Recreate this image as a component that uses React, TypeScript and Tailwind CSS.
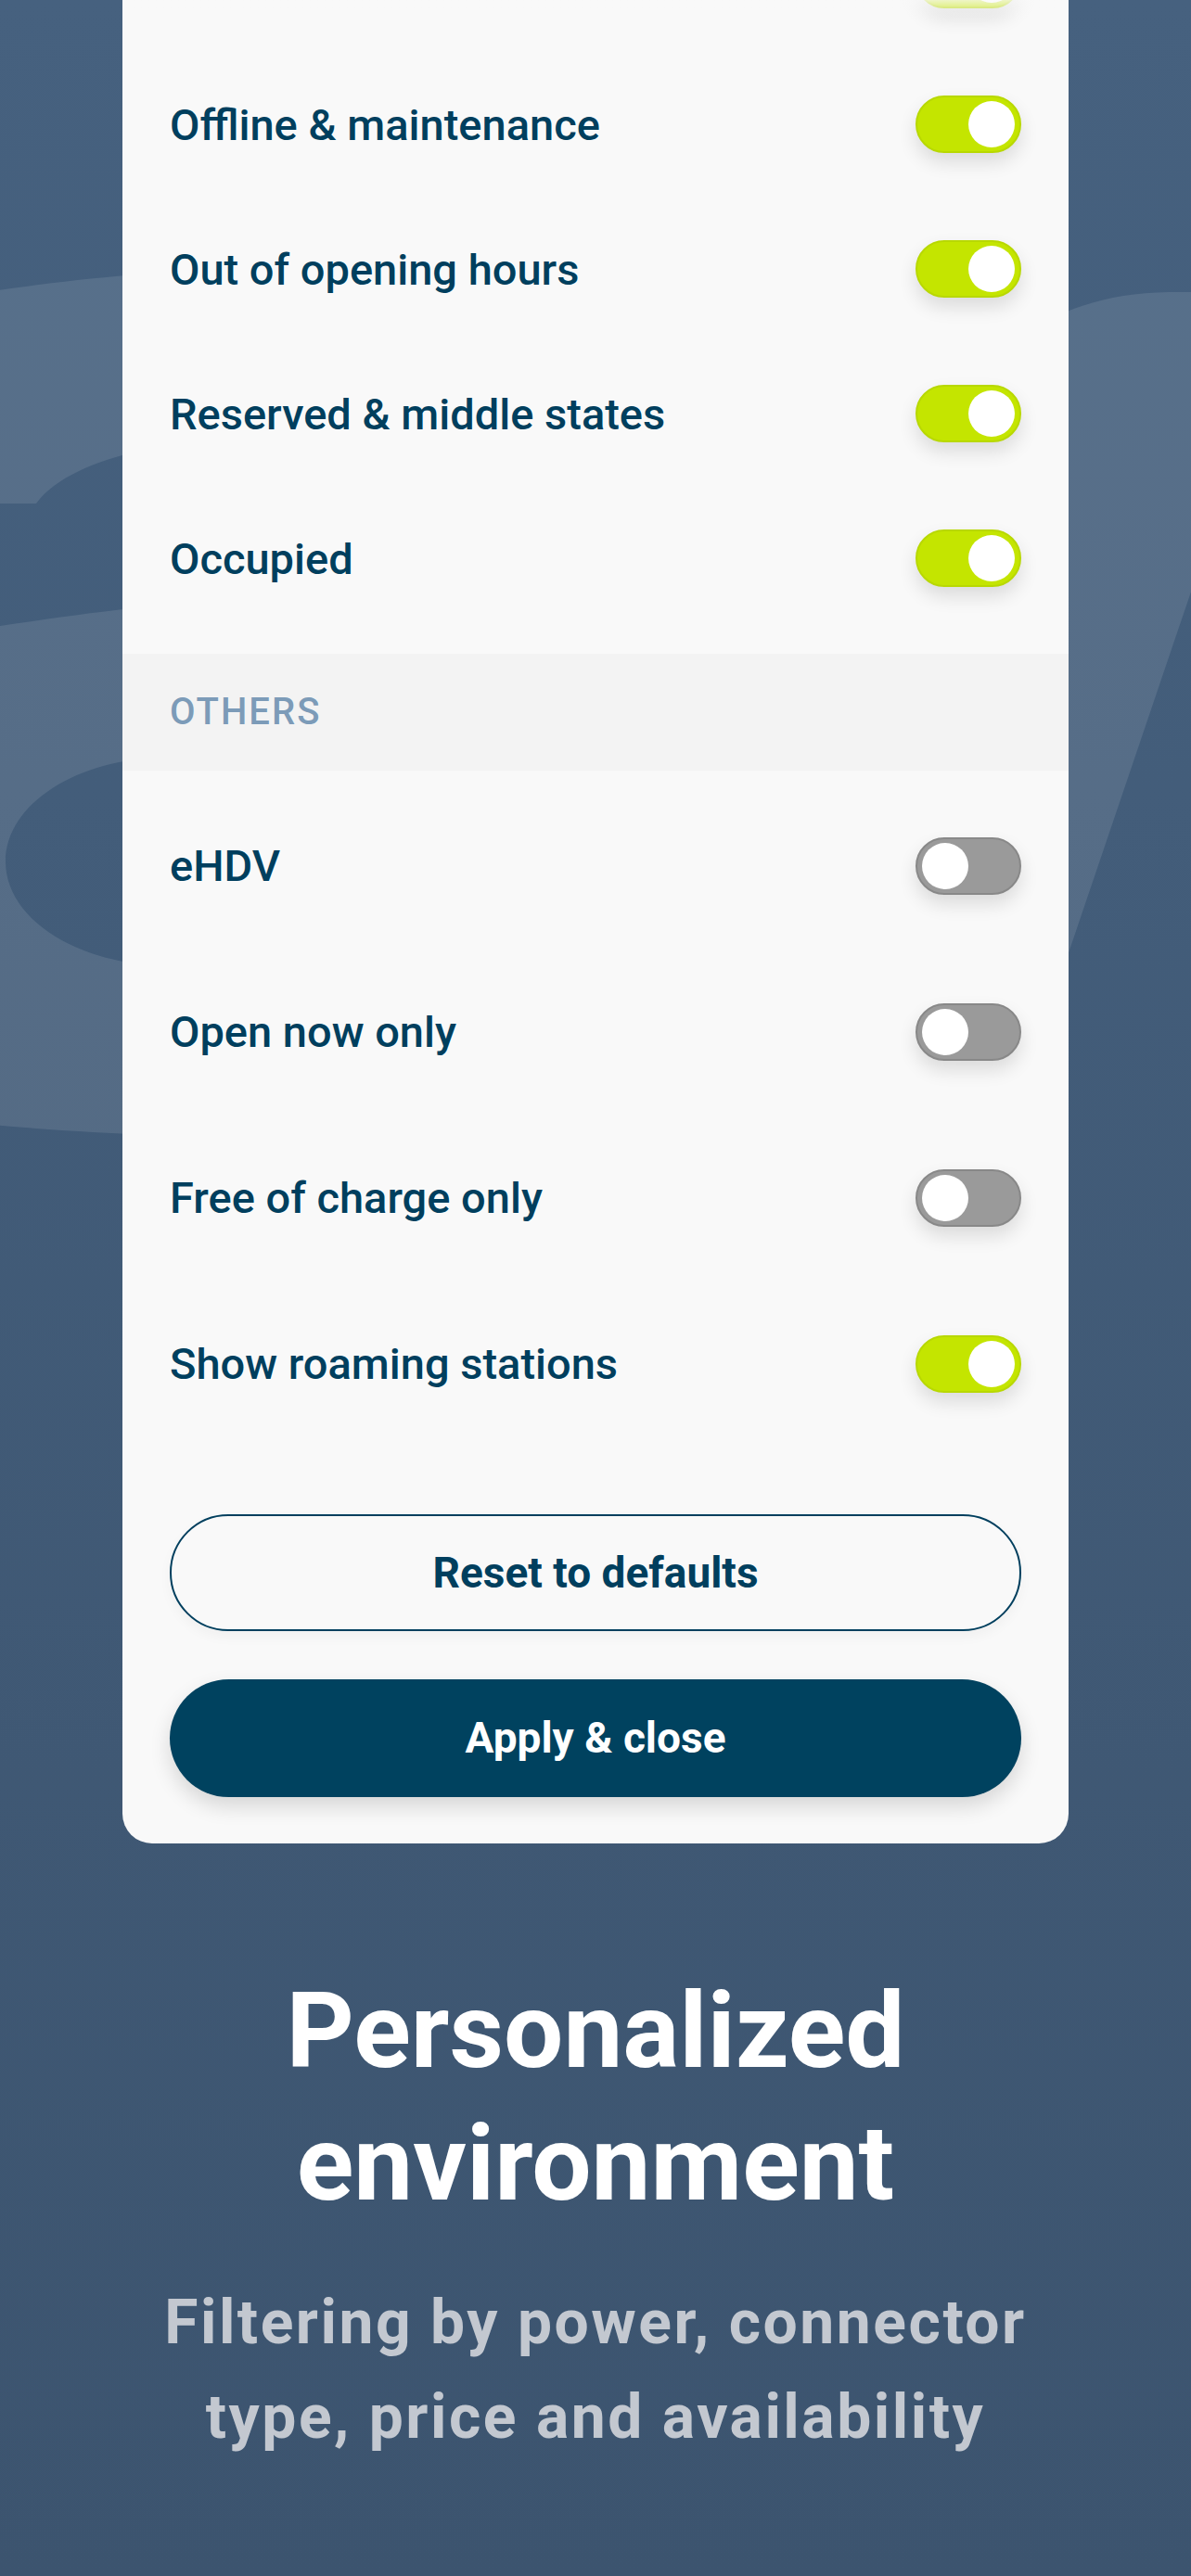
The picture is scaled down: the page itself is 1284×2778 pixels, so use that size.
import React from "react";

const font = { fontFamily: "Roboto, 'Liberation Sans', sans-serif" };

function Toggle({ on }: { on: boolean }) {
  return on ? (
    <div className="relative w-[114px] h-[62px] rounded-full bg-[#c4e500] border-2 border-[#b8d800] shadow-[0_10px_20px_rgba(0,0,0,0.12)] shrink-0">
      <div className="absolute right-[5px] top-[4px] w-[50px] h-[50px] rounded-full bg-white" />
    </div>
  ) : (
    <div className="relative w-[114px] h-[62px] rounded-full bg-[#9a9a9a] border-2 border-[#888888] shadow-[0_10px_20px_rgba(0,0,0,0.12)] shrink-0">
      <div className="absolute left-[5px] top-[4px] w-[50px] h-[50px] rounded-full bg-white" />
    </div>
  );
}

function Row({ label, on, h }: { label: string; on: boolean; h: string }) {
  return (
    <div className={`flex items-center justify-between px-[51px] ${h}`}>
      <span className="text-[47px] font-medium leading-none text-[#003f5e]">{label}</span>
      <Toggle on={on} />
    </div>
  );
}

export default function App() {
  return (
    <div
      className="relative w-[1284px] h-[2778px] overflow-hidden bg-linear-to-b from-[#46617f] to-[#3c546f]"
      style={font}
    >
      <svg
        className="absolute left-0 top-0"
        width="1284"
        height="2778"
        viewBox="0 0 1284 2778"
      >
        <g fill="#ffffff" fillOpacity="0.1">
          <path d="M-60 322 C 40 306, 120 296, 240 290 L 260 290 L 260 470 C 160 478, 70 500, 39 543 L -60 543 Z" />
          <path
            fillRule="evenodd"
            d="M-60 684 C 60 666, 150 652, 260 646 L 260 1226 C 120 1224, 40 1218, -60 1208 Z M 6 929 C 6 867, 84 817, 180 817 C 276 817, 354 867, 354 929 C 354 991, 276 1041, 180 1041 C 84 1041, 6 991, 6 929 Z"
          />
          <path d="M1100 362 C 1140 336, 1190 316, 1260 315 L 1300 315 L 1300 591 L 1100 1181 Z" />
        </g>
      </svg>

      <div className="relative z-10 mx-[132px] w-[1020px] -mt-[100px] rounded-b-[32px] bg-[#f9f9f9] pb-[50px]">
        <Row label="" on h="h-[156px]" />
        <Row label="Offline & maintenance" on h="h-[156px]" />
        <Row label="Out of opening hours" on h="h-[156px]" />
        <Row label="Reserved & middle states" on h="h-[156px]" />
        <Row label="Occupied" on h="h-[156px]" />

        <div className="mt-[25px] h-[126px] bg-[#f3f3f3] flex items-center px-[51px]">
          <span className="text-[40px] font-medium leading-none tracking-[2px] text-[#7c9bb8]">
            OTHERS
          </span>
        </div>

        <div className="pt-[13px]">
          <Row label="eHDV" on={false} h="h-[179px]" />
          <Row label="Open now only" on={false} h="h-[179px]" />
          <Row label="Free of charge only" on={false} h="h-[179px]" />
          <Row label="Show roaming stations" on h="h-[179px]" />
        </div>

        <div className="mt-[73px] px-[51px] flex flex-col gap-[52px]">
          <button className="h-[126px] w-full rounded-full border-2 border-[#003f5e] bg-[#f9f9f9] text-[46px] font-bold text-[#003f5e] shadow-[0_6px_14px_rgba(0,0,0,0.04)]">
            Reset to defaults
          </button>
          <button className="h-[127px] w-full rounded-full bg-[#00425f] text-[46px] font-bold text-white shadow-[0_10px_22px_rgba(0,0,0,0.14)]">
            Apply &amp; close
          </button>
        </div>

        <div className="absolute left-0 top-[100px] w-full h-[24px] bg-linear-to-b from-[#f9f9f9]/80 to-[#f9f9f9]/0" />
      </div>

      <div className="relative z-10 mt-[131px] flex flex-col items-center text-center">
        <h1 className="text-[114px] font-bold leading-[143px] text-white">
          Personalized
          <br />
          environment
        </h1>
        <p className="mt-[49px] text-[66px] font-bold leading-[102px] tracking-[2.5px] text-[#c3c8d0]">
          Filtering by power, connector
          <br />
          type, price and availability
        </p>
      </div>
    </div>
  );
}
